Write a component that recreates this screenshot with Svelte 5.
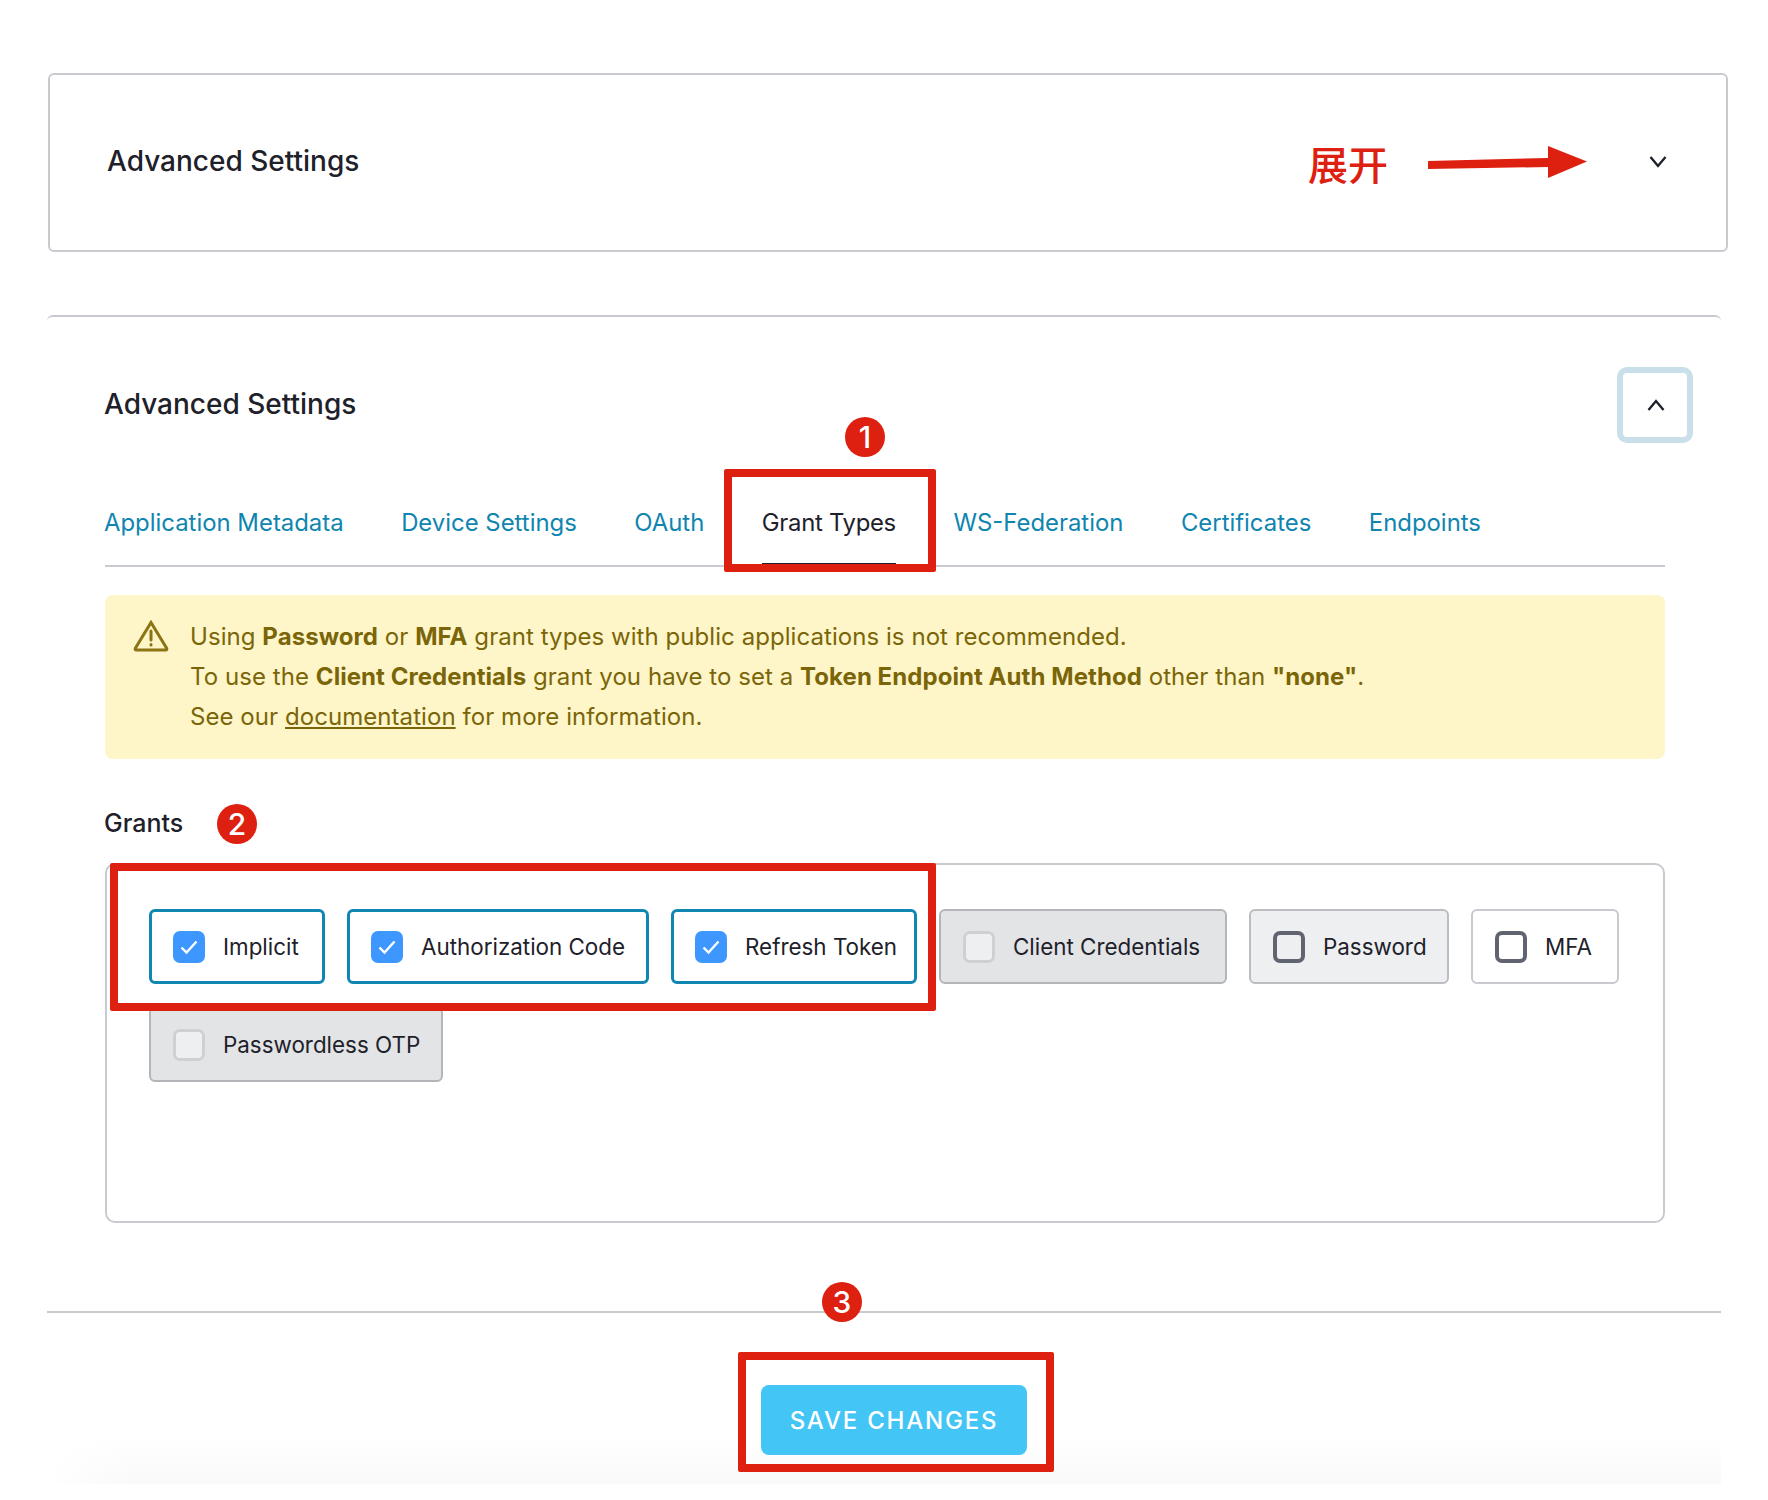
<script>
  const tabs = [
    { label: "Application Metadata" },
    { label: "Device Settings" },
    { label: "OAuth" },
    { label: "Grant Types", active: true },
    { label: "WS-Federation" },
    { label: "Certificates" },
    { label: "Endpoints" },
  ];

  const grants = [
    { label: "Implicit", state: "checked", width: 176 },
    { label: "Authorization Code", state: "checked", width: 302 },
    { label: "Refresh Token", state: "checked", width: 246 },
    { label: "Client Credentials", state: "disabled", width: 288 },
    { label: "Password", state: "hover", width: 200 },
    { label: "MFA", state: "plain", width: 148 },
    { label: "Passwordless OTP", state: "disabled", width: 294 },
  ];
</script>

<div class="page">
  <div class="card">
    <h2>Advanced Settings</h2>
    <svg class="chevron" width="20" height="14" viewBox="0 0 20 14">
      <path d="M2.500 2 L10 11 L17.500 2" />
    </svg>
  </div>

  <section class="panel">
    <div class="panel-head">
      <h2>Advanced Settings</h2>
      <button class="toggle" aria-label="Collapse">
        <svg class="chevron" width="20" height="14" viewBox="0 0 20 14">
          <path d="M2.500 11 L10 2 L17.500 11" />
        </svg>
      </button>
    </div>

    <nav class="tabs">
      {#each tabs as tab}
        <a href="#top" class:active={tab.active}>{tab.label}</a>
      {/each}
    </nav>

    <div class="alert">
      <svg class="alert-icon" width="36" height="32" viewBox="0 0 36 32">
        <path d="M18 2.5 L33.5 28 Q34.5 30 32.5 30 L3.5 30 Q1.500 30 2.500 28 Z" />
        <path d="M18 11 V20" />
        <path d="M18 24.500 V25" />
      </svg>
      <div class="alert-text">
        <p>Using <b>Password</b> or <b>MFA</b> grant types with public applications is not recommended.</p>
        <p>To use the <b>Client Credentials</b> grant you have to set a <b>Token Endpoint Auth Method</b> other than <b>"none"</b>.</p>
        <p>See our <a href="#top">documentation</a> for more information.</p>
      </div>
    </div>

    <div class="grants-label">Grants</div>
    <div class="grants">
      {#each grants as grant}
        <div class="chip {grant.state}" style="width: {grant.width}px">
          <span class="box">
            {#if grant.state === "checked"}
              <svg width="20" height="16" viewBox="0 0 20 16">
                <path d="M2.500 8.500 L7.500 13.500 L17.500 2.500" />
              </svg>
            {/if}
          </span>
          {grant.label}
        </div>
      {/each}
    </div>
  </section>

  <div class="footer">
    <button class="save">SAVE CHANGES</button>
  </div>

  <!-- red annotations drawn over the screenshot -->
  <span class="note">展开</span>
  <svg class="arrow" width="160" height="34" viewBox="0 0 160 34">
    <path d="M0 15 L120 12 L120 0 L159 15.500 L120 32 L120 21 L0 23 Z" />
  </svg>
  <span class="badge one">1</span>
  <span class="badge two">2</span>
  <span class="badge three">3</span>
  <div class="mark mark-tab"></div>
  <div class="mark mark-grants"></div>
  <div class="mark mark-save"></div>
</div>

<style>
  :global(body) {
    margin: 0;
    background: #fff;
  }

  .page {
    position: relative;
    height: 1500px;
    box-sizing: border-box;
    padding-top: 73px;
    font-family: Inter, "Noto Sans CJK SC", sans-serif;
    color: #1e212a;
    overflow: hidden;
  }

  h2 {
    margin: 0;
    font-size: 28px;
    line-height: 34px;
    font-weight: 500;
  }

  .card {
    box-sizing: border-box;
    width: 1680px;
    height: 179px;
    margin-left: 48px;
    padding: 0 58px 0 57px;
    border: 2px solid #c9cacf;
    border-radius: 6px;
    display: flex;
    align-items: center;
    justify-content: space-between;
  }

  .card h2 {
    margin-top: -3px;
  }

  .card .chevron {
    margin-top: -2px;
  }

  .chevron path {
    fill: none;
    stroke: #1e212a;
    stroke-width: 2.400;
  }

  .panel {
    width: 1674px;
    box-sizing: border-box;
    margin: 63px 0 0 47px;
    padding: 50px 56px 88px 58px;
    border-top: 2px solid #c9cacf;
    border-bottom: 2px solid #c9cacf;
    border-radius: 6px 6px 0 0;
  }

  .panel-head {
    height: 76px;
    display: flex;
    align-items: center;
    justify-content: space-between;
  }

  .panel-head h2 {
    margin: -3px 0 0 -1px;
  }

  .toggle {
    box-sizing: border-box;
    width: 76px;
    height: 76px;
    margin-right: -28px;
    border: 6px solid #c9e0ea;
    border-radius: 10px;
    background: #fff;
    padding: 2px 0 0 2px;
    display: flex;
    align-items: center;
    justify-content: center;
  }

  .tabs {
    display: flex;
    gap: 57.500px;
    height: 124px;
    box-sizing: border-box;
    align-items: flex-end;
    border-bottom: 2px solid #c9cacf;
  }

  .tabs a {
    font-size: 23.900px;
    line-height: 30px;
    padding-bottom: 27px;
    color: #0f85b0;
    text-decoration: none;
    margin-bottom: -2px;
    border-bottom: 2px solid transparent;
  }

  .tabs a:first-child {
    margin-left: -1px;
  }

  .tabs a.active {
    color: #1e212a;
    letter-spacing: -0.300px;
    padding-bottom: 25px;
    border-bottom: 4px solid #1e212a;
  }

  .alert {
    margin-top: 28px;
    height: 164px;
    box-sizing: border-box;
    padding: 22px 28px;
    background: #fef5c9;
    border-radius: 8px;
    display: flex;
    gap: 21px;
    color: #7a6608;
  }

  .alert-icon {
    flex: none;
    margin-top: 3px;
  }

  .alert-icon path {
    fill: none;
    stroke: #8a7414;
    stroke-width: 3;
    stroke-linecap: round;
  }

  .alert-text {
    font-size: 24px;
    line-height: 40px;
    letter-spacing: 0.060px;
  }

  .alert-text p {
    margin: 0;
  }

  .alert-text b {
    font-weight: 700;
  }

  .alert-text a {
    color: inherit;
    text-decoration: underline;
  }

  .grants-label {
    margin-top: 49px;
    font-size: 25px;
    line-height: 30px;
    font-weight: 500;
    margin-left: -1px;
  }

  .grants {
    margin-top: 25px;
    height: 360px;
    box-sizing: border-box;
    padding: 44px 42px;
    border: 2px solid #c9cacf;
    border-radius: 10px;
    display: flex;
    flex-wrap: wrap;
    align-content: flex-start;
    gap: 23px 22px;
  }

  .chip {
    box-sizing: border-box;
    height: 75px;
    padding: 0 22px;
    border: 2px solid #c9cacf;
    border-radius: 6px;
    display: flex;
    align-items: center;
    gap: 18px;
    font-size: 22.400px;
    white-space: nowrap;
  }

  .chip.checked {
    border: 3px solid #1086b0;
    padding: 0 21px;
  }

  .chip.disabled {
    background: #e3e4e6;
    border-color: #b4b5b9;
  }

  .chip.hover {
    background: #eeeff1;
    border-color: #bcbdc1;
  }

  .box {
    box-sizing: border-box;
    width: 32px;
    height: 32px;
    flex: none;
    border-radius: 7px;
    border: 4px solid #5f6470;
    display: flex;
    align-items: center;
    justify-content: center;
  }

  .checked .box {
    background: #3d97ff;
    border: none;
  }

  .disabled .box {
    background: #eeeff1;
    border: 3px solid #cfd0d4;
  }

  .box path {
    fill: none;
    stroke: #fff;
    stroke-width: 2.400;
  }

  .footer {
    width: 1674px;
    height: 171px;
    box-sizing: border-box;
    margin-left: 47px;
    padding: 72px 0 0 20px;
    display: flex;
    justify-content: center;
    background:
      linear-gradient(to right, #fff 0, rgba(255, 255, 255, 0) 90px),
      linear-gradient(to bottom, #fff 74%, #f9f9f9 100%);
  }

  .save {
    width: 266px;
    height: 70px;
    border: none;
    border-radius: 8px;
    background: #43c5f5;
    color: #fff;
    font-family: inherit;
    font-size: 24px;
    font-weight: 500;
    letter-spacing: 1.800px;
  }

  .note {
    position: absolute;
    left: 1308px;
    top: 141px;
    font-size: 40px;
    line-height: 50px;
    font-weight: 500;
    color: #dd2010;
  }

  .arrow {
    position: absolute;
    left: 1428px;
    top: 146px;
  }

  .arrow path {
    fill: #dd2010;
  }

  .badge {
    position: absolute;
    box-sizing: border-box;
    width: 40px;
    height: 40px;
    border-radius: 50%;
    background: #dd2010;
    color: #fff;
    font-size: 30px;
    font-weight: 500;
    line-height: 40px;
    text-align: center;
  }

  .one { left: 845px; top: 417px; }
  .two { left: 217px; top: 804px; }
  .three { left: 822px; top: 1282px; }

  .mark {
    position: absolute;
    box-sizing: border-box;
    border: 8px solid #dd2010;
    border-radius: 2px;
  }

  .mark-tab { left: 724px; top: 469px; width: 212px; height: 103px; }
  .mark-grants { left: 110px; top: 863px; width: 826px; height: 148px; }
  .mark-save { left: 738px; top: 1352px; width: 316px; height: 120px; }
</style>
